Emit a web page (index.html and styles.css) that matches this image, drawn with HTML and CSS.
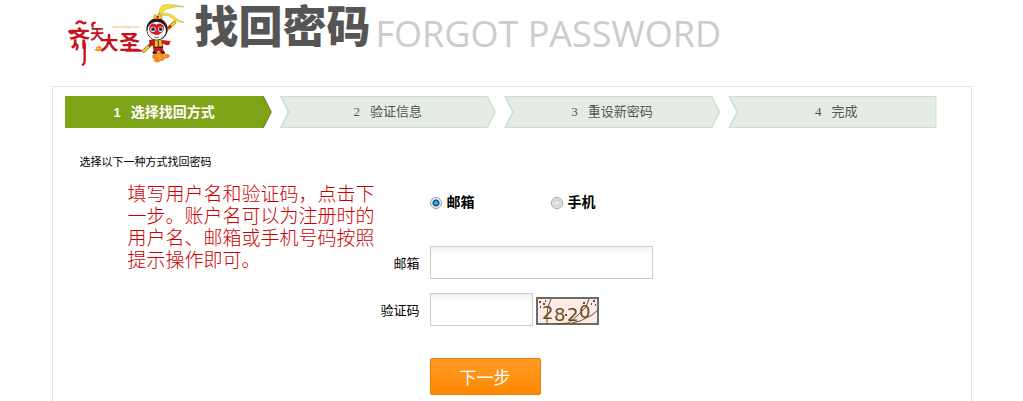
FILE: index.html
```
<!DOCTYPE html>
<html lang="zh-CN">
<head>
    <meta charset="UTF-8">
    <meta name="viewport" content="width=device-width, initial-scale=1.0">
    <title>找回密码</title>
    <link rel="stylesheet" href="styles.css">
</head>
<body>
    <div class="container">
        <header class="header">
            <svg class="logo" viewBox="54 0 354 201" role="img" aria-label="齐天大圣">
                <!-- lettering -->
                <g class="logo-text">
                    <text x="56" y="138" font-size="64">齐</text>
                    <text x="121" y="117" font-size="42">天</text>
                    <text x="149" y="151" font-size="56">大</text>
                    <text x="208" y="149" font-size="62">圣</text>
                </g>
                <g fill="none" stroke="#c8101c" stroke-width="7" stroke-linecap="round">
                    <path d="M58 94q6 10 14 2M80 70q8-10 16-3q8 6 10 1"/>
                    <path d="M104 130v52q0 8-5 12"/>
                    <path d="M78 132q8 4 2 16"/>
                    <path d="M128 80q-4-12 6-12M230 152h42"/>
                </g>
                <text class="logo-url" x="188" y="85">www.dsqq.com</text>
                <path d="M129 147q5 4 9-1q0-8 9-8q9 1 8 9q-2 8-11 7q-10-1-15-7z" fill="#f39a1d"/>
                <path d="M141 146q5-4 7 1" fill="none" stroke="#fff" stroke-width="2"/>
                <!-- cloud -->
                <path d="M307 172q-2-10 9-10q4-8 14-5q10-3 13 5q14-3 17 6q-3 9-15 7q-4 10-14 7q-5 9-14 4q-8-2-3-9q-6 1-7-5z" fill="#f08a1c"/>
                <path d="M320 169q7-5 11 1t-5 8M339 168q6-3 8 2" fill="none" stroke="#fdd58a" stroke-width="2"/>
                <!-- staff -->
                <path d="M281 153L374 67" stroke="#7d6412" stroke-width="10" stroke-linecap="round"/>
                <path d="M281 153L374 67" stroke="#f6d420" stroke-width="7" stroke-linecap="round"/>
                <path d="M296 139l13-12M355 85l8-8" stroke="#d81b1b" stroke-width="7"/>
                <!-- feathers -->
                <path d="M327 43q0-34 31-29q25 0 44 7q-20-3-39 3q-23 2-28 21z" fill="#f5df36" stroke="#9a8d20" stroke-width="1"/>
                <path d="M331 45q18-13 38 2q16 14 34 21q-20 0-37-13q-17-16-33-5z" fill="#f5df36" stroke="#9a8d20" stroke-width="1"/>
                <!-- body -->
                <path d="M338 120q16 3 24 3l-5 13q-12 0-22-8z" fill="#d8161c"/>
                <path d="M312 119l-13 2q-3 9 9 12l4 17l-3 10h9l7-10l9 9h10l-7-12v-25z" fill="#d8161c" stroke="#41140d" stroke-width="2"/>
                <path d="M315 121l19 0l2 17l-21 3z" fill="#f4c51d"/>
                <path d="M313 142h27M325 122v18" stroke="#41140d" stroke-width="3"/>
                <path d="M308 158h11M334 158h10" stroke="#231815" stroke-width="5"/>
                <!-- head -->
                <ellipse cx="321" cy="88" rx="32" ry="33" fill="#231815"/>
                <ellipse cx="320" cy="92" rx="28" ry="27" fill="#fff"/>
                <path d="M319 74q-11-9-20 3q-7 18 12 26q9 4 18 0q21-13 10-28q-11-9-20-1z" fill="#df1721"/>
                <path d="M312 111q8 4 15 0" fill="none" stroke="#231815" stroke-width="2"/>
                <circle cx="309" cy="88" r="8" fill="#fff"/>
                <circle cx="332" cy="88" r="8" fill="#fff"/>
                <circle cx="309" cy="88" r="6" fill="#176b9d"/>
                <circle cx="332" cy="88" r="6" fill="#176b9d"/>
                <circle cx="310" cy="87" r="3" fill="#111"/>
                <circle cx="331" cy="87" r="3" fill="#111"/>
                <path d="M310 54l4-12l8 7l5-12l6 13l6 5q-15 4-29-1z" fill="#f4ca1f" stroke="#826417" stroke-width="1"/>
                <circle cx="323" cy="51" r="4" fill="#d8161c"/>
            </svg>
            <h1>找回密码</h1>
            <span class="subtitle">FORGOT PASSWORD</span>
        </header>

        <main class="panel">
            <ol class="steps">
                <li class="step first active"><span>1</span>选择找回方式</li>
                <li class="step"><span>2</span>验证信息</li>
                <li class="step"><span>3</span>重设新密码</li>
                <li class="step last"><span>4</span>完成</li>
            </ol>

            <p class="tip">选择以下一种方式找回密码</p>

            <div class="content">
                <p class="note">填写用户名和验证码，点击下一步。账户名可以为注册时的用户名、邮箱或手机号码按照提示操作即可。</p>

                <form class="form">
                    <div class="methods">
                        <label><input type="radio" name="method" value="email" checked>邮箱</label>
                        <label><input type="radio" name="method" value="phone">手机</label>
                    </div>
                    <div class="row">
                        <label for="email">邮箱</label>
                        <input type="text" id="email" class="text">
                    </div>
                    <div class="row">
                        <label for="code">验证码</label>
                        <input type="text" id="code" class="text short">
                        <svg class="captcha" viewBox="0 0 63 28" role="img" aria-label="验证码 2820">
                            <rect x="1" y="1" width="61" height="26" fill="#fdebea" stroke="#6b6b68" stroke-width="2"/>
                            <g class="captcha-text">
                                <text x="6" y="22">2</text>
                                <text x="18" y="24">8</text>
                                <text x="31" y="24">2</text>
                                <text x="43" y="21">0</text>
                            </g>
                            <g fill="none" stroke="#6b4f1c" stroke-width="1">
                                <path d="M15 2l-3 8l-1 8v9M53 2l-3 8l-8 8l-9 8M62 13l-6 5l-12 6l-8 2M20 27l13-1"/>
                                <path d="M3 5h2M7 7h2M4 10h1M9 4h1M57 4h2M59 8h1M47 6h2M55 7h1M29 18h2" stroke-width="2"/>
                            </g>
                        </svg>
                    </div>
                    <button type="button" class="next">下一步</button>
                </form>
            </div>
        </main>
    </div>
</body>
</html>
```
FILE: styles.css
```
* {
    box-sizing: border-box;
}
body {
    margin: 0;
    background: #fff;
    color: #000;
    font-family: "Liberation Sans", "Noto Sans CJK SC", sans-serif;
    font-size: 13px;
}
.container {
    max-width: 920px;
    margin: 0 auto;
}

/* header */
.header {
    display: flex;
    align-items: flex-start;
    height: 86px;
    padding-left: 16px;
}
.logo {
    width: 118px;
    height: 67px;
}
.logo-text {
    fill: #c8101c;
    font-family: "Liberation Sans", "Noto Sans CJK SC", sans-serif;
    font-weight: bold;
}
.logo-url {
    fill: #eea75c;
    font-family: "Liberation Sans", sans-serif;
    font-size: 12px;
}
h1 {
    margin: 0 0 0 9px;
    color: #555;
    font-size: 44px;
    font-weight: 900;
    line-height: 55px;
}
.subtitle {
    margin-left: 5px;
    color: #ccc;
    font-family: "Open Sans", sans-serif;
    font-size: 36px;
    line-height: 68px;
    white-space: nowrap;
}

/* panel */
.panel {
    padding: 9px 34px 6px 12px;
    border: 1px solid #e4e4e4;
    border-bottom: none;
}
.steps {
    display: grid;
    grid-template-columns: 207fr 216fr 216fr 208fr;
    gap: 8px;
    margin: 0;
    padding: 0;
    list-style: none;
}
.step {
    position: relative;
    z-index: 0;
    height: 32px;
    background: #cddcd2;
    color: #555;
    line-height: 32px;
    text-align: center;
    clip-path: polygon(0 0, calc(100% - 8px) 0, 100% 50%, calc(100% - 8px) 100%, 0 100%, 8px 50%);
}
.step::before {
    content: "";
    position: absolute;
    z-index: -1;
    inset: 1px;
    background: #e4ece5;
    clip-path: polygon(1px 0, calc(100% - 8px) 0, 100% 50%, calc(100% - 8px) 100%, 1px 100%, 9px 50%);
}
.step span {
    margin-right: 10px;
    font-family: "Liberation Serif", serif;
}
.step.first {
    padding-right: 8px;
    clip-path: polygon(0 0, calc(100% - 8px) 0, 100% 50%, calc(100% - 8px) 100%, 0 100%);
}
.step.last {
    padding-left: 8px;
    clip-path: polygon(0 0, 100% 0, 100% 100%, 0 100%, 8px 50%);
}
.step.last::before {
    clip-path: polygon(1px 0, 100% 0, 100% 100%, 1px 100%, 9px 50%);
}
.step.active {
    background: #5b8216;
    color: #fff;
    font-size: 14px;
    font-weight: bold;
}
.step.active::before {
    inset: 0 1px 0 0;
    background: #7fa316;
    clip-path: polygon(0 0, calc(100% - 8px) 0, 100% 50%, calc(100% - 8px) 100%, 0 100%);
}
.step.active span {
    font-family: "Liberation Sans", sans-serif;
    font-size: 13px;
}
.tip {
    margin: 24px 0 0 15px;
    font-size: 11px;
    line-height: 20px;
}

/* content */
.content {
    display: flex;
    padding-left: 63px;
}
.note {
    flex: none;
    width: 247px;
    margin: 12px 0 0;
    color: #c00;
    font-size: 19px;
    font-weight: 300;
    line-height: 22px;
}
.form {
    flex: 1;
    padding-top: 20px;
}
.methods {
    display: flex;
    margin: 0 0 33px 55px;
}
.methods label {
    display: flex;
    align-items: center;
    width: 121px;
    font-size: 14px;
    font-weight: bold;
    line-height: 21px;
}
.methods input {
    appearance: none;
    width: 12px;
    height: 12px;
    margin: 0 5px 0 0;
    border: 1px solid #9a9fa3;
    border-radius: 50%;
    background: radial-gradient(circle, #e8e8e8 0 2px, #ccd0d3 3px, #f4f4f4 5px);
}
.methods input:checked {
    background: radial-gradient(circle, #4cb4e0 0 1px, #0b4d7d 3px, #eef1f3 4px);
}
.row {
    display: flex;
    align-items: center;
    margin-bottom: 14px;
}
.row label {
    width: 45px;
    margin-right: 10px;
    text-align: right;
    white-space: nowrap;
}
.text {
    width: 223px;
    height: 33px;
    padding: 0 6px;
    border: 1px solid #ccc;
    background: linear-gradient(#f1f1f1, #fff 8px);
    font-size: 13px;
}
.text.short {
    width: 103px;
}
.captcha {
    width: 63px;
    height: 28px;
    margin: 2px 0 0 3px;
}
.captcha-text {
    fill: #6b4f1c;
    font-family: "DejaVu Sans", sans-serif;
    font-size: 18px;
}
.next {
    width: 111px;
    height: 37px;
    margin: 18px 0 0 55px;
    padding: 0;
    border: 1px solid #e87c07;
    border-radius: 2px;
    background: linear-gradient(#ff9a26, #ff8800);
    color: #fff;
    font-family: inherit;
    font-size: 17px;
    cursor: pointer;
}
```
